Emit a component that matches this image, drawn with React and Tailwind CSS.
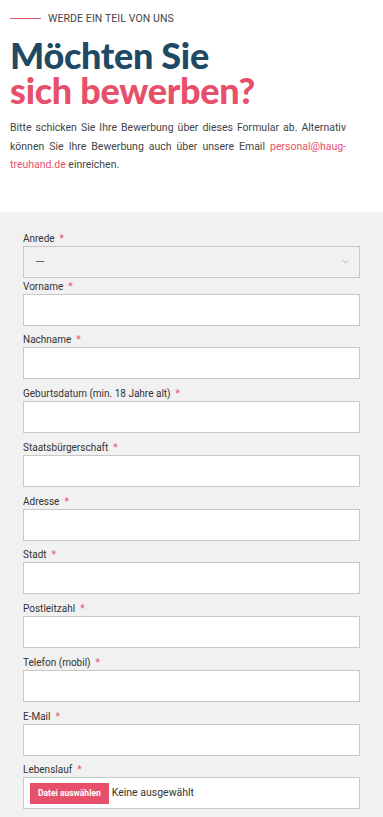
import React from "react";

const fields = [
  "Vorname",
  "Nachname",
  "Geburtsdatum (min. 18 Jahre alt)",
  "Staatsbürgerschaft",
  "Adresse",
  "Stadt",
  "Postleitzahl",
  "Telefon (mobil)",
  "E-Mail",
];

function Label({ text }) {
  return (
    <div className="h-[14px] text-[10px] leading-[14px] text-[#333]">
      {text}
      <span className="ml-[5px] text-[#e6506a]">*</span>
    </div>
  );
}

export default function App() {
  return (
    <div className="w-[383px] bg-white font-['Roboto',sans-serif]">
      <div className="px-[10px] pt-[12px] pb-[37px]">
        <div className="flex h-[14px] items-start gap-[7px]">
          <div className="mt-[6px] h-[1px] w-[31px] bg-[#e05a6c]" />
          <span className="text-[10.5px] leading-[14px] tracking-[0.1px] text-[#444]">
            WERDE EIN TEIL VON UNS
          </span>
        </div>
        <h1 className="mt-[12px] font-['Lato',sans-serif] text-[36px] font-black leading-[35px] tracking-[-0.3px]">
          <span className="block text-[#1e4a64]">Möchten Sie</span>
          <span className="block text-[#e6506a]">sich bewerben?</span>
        </h1>
        <p className="mt-[11px] w-[336px] text-justify text-[10.5px] leading-[18.5px] text-[#444]">
          Bitte schicken Sie Ihre Bewerbung über dieses Formular ab. Alternativ
          können Sie Ihre Bewerbung auch über unsere Email{" "}
          <span className="text-[#e6506a]">personal@haug-treuhand.de</span>{" "}
          einreichen.
        </p>
      </div>
      <div className="bg-[#f1f1f1] px-[23px] pt-[20px] pb-[10px]">
        <Label text="Anrede" />
        <div className="flex h-[32px] items-center justify-between border border-[#c8c8c8] bg-[#f1f1f1] pl-[12px] pr-[10px]">
          <span className="text-[10px] text-[#333]">---</span>
          <svg width="7" height="5" viewBox="0 0 7 5" fill="none">
            <path d="M0.5 1L3.5 4L6.5 1" stroke="#aaa" strokeWidth="0.8" />
          </svg>
        </div>
        <div className="mt-[2px]">
          {fields.map((f) => (
            <div key={f} className="mb-[7.75px]">
              <Label text={f} />
              <div className="h-[32px] border border-[#c8c8c8] bg-white" />
            </div>
          ))}
          <div>
            <Label text="Lebenslauf" />
            <div className="flex h-[32px] items-center border border-[#c8c8c8] bg-white pl-[6px]">
              <span className="flex h-[21px] items-center bg-[#e6506a] px-[8px] text-[8.5px] font-bold text-white">
                Datei auswählen
              </span>
              <span className="ml-[3px] text-[10.5px] text-[#333]">Keine ausgewählt</span>
            </div>
          </div>
        </div>
      </div>
    </div>
  );
}
